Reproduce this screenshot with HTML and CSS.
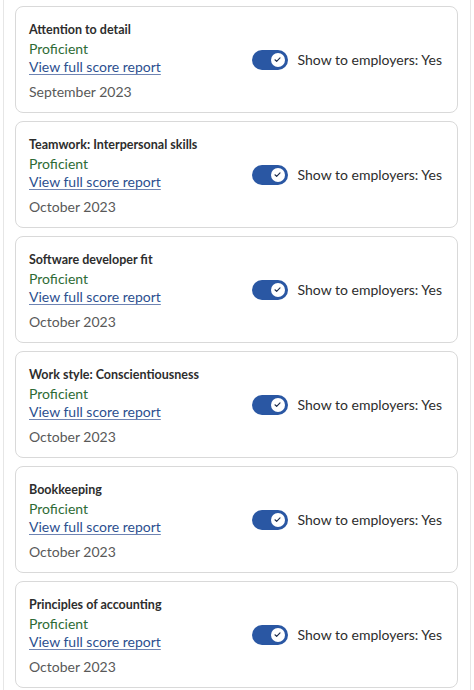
FILE: index.html
```html
<!DOCTYPE html>
<html lang="en">
<head>
<meta charset="utf-8">
<title>Assessments</title>
<link rel="stylesheet" href="styles.css">
</head>
<body>
<div class="wrap">
  <div class="card">
    <div class="info">
      <div class="title">Attention to detail</div>
      <div class="level">Proficient</div>
      <a class="link" href="#">View full score report</a>
      <div class="date">September 2023</div>
    </div>
    <div class="share">
      <span class="toggle"><span class="knob"><svg viewBox="0 0 16 16" width="9" height="9"><path d="M3.5 8.5l3 2.8L12.5 5" fill="none" stroke="#1c2b4a" stroke-width="2" stroke-linecap="round" stroke-linejoin="round"/></svg></span></span>
      <span class="label">Show to employers: Yes</span>
    </div>
  </div>
  <div class="card">
    <div class="info">
      <div class="title">Teamwork: Interpersonal skills</div>
      <div class="level">Proficient</div>
      <a class="link" href="#">View full score report</a>
      <div class="date">October 2023</div>
    </div>
    <div class="share">
      <span class="toggle"><span class="knob"><svg viewBox="0 0 16 16" width="9" height="9"><path d="M3.5 8.5l3 2.8L12.5 5" fill="none" stroke="#1c2b4a" stroke-width="2" stroke-linecap="round" stroke-linejoin="round"/></svg></span></span>
      <span class="label">Show to employers: Yes</span>
    </div>
  </div>
  <div class="card">
    <div class="info">
      <div class="title">Software developer fit</div>
      <div class="level">Proficient</div>
      <a class="link" href="#">View full score report</a>
      <div class="date">October 2023</div>
    </div>
    <div class="share">
      <span class="toggle"><span class="knob"><svg viewBox="0 0 16 16" width="9" height="9"><path d="M3.5 8.5l3 2.8L12.5 5" fill="none" stroke="#1c2b4a" stroke-width="2" stroke-linecap="round" stroke-linejoin="round"/></svg></span></span>
      <span class="label">Show to employers: Yes</span>
    </div>
  </div>
  <div class="card">
    <div class="info">
      <div class="title">Work style: Conscientiousness</div>
      <div class="level">Proficient</div>
      <a class="link" href="#">View full score report</a>
      <div class="date">October 2023</div>
    </div>
    <div class="share">
      <span class="toggle"><span class="knob"><svg viewBox="0 0 16 16" width="9" height="9"><path d="M3.5 8.5l3 2.8L12.5 5" fill="none" stroke="#1c2b4a" stroke-width="2" stroke-linecap="round" stroke-linejoin="round"/></svg></span></span>
      <span class="label">Show to employers: Yes</span>
    </div>
  </div>
  <div class="card">
    <div class="info">
      <div class="title">Bookkeeping</div>
      <div class="level">Proficient</div>
      <a class="link" href="#">View full score report</a>
      <div class="date">October 2023</div>
    </div>
    <div class="share">
      <span class="toggle"><span class="knob"><svg viewBox="0 0 16 16" width="9" height="9"><path d="M3.5 8.5l3 2.8L12.5 5" fill="none" stroke="#1c2b4a" stroke-width="2" stroke-linecap="round" stroke-linejoin="round"/></svg></span></span>
      <span class="label">Show to employers: Yes</span>
    </div>
  </div>
  <div class="card">
    <div class="info">
      <div class="title">Principles of accounting</div>
      <div class="level">Proficient</div>
      <a class="link" href="#">View full score report</a>
      <div class="date">October 2023</div>
    </div>
    <div class="share">
      <span class="toggle"><span class="knob"><svg viewBox="0 0 16 16" width="9" height="9"><path d="M3.5 8.5l3 2.8L12.5 5" fill="none" stroke="#1c2b4a" stroke-width="2" stroke-linecap="round" stroke-linejoin="round"/></svg></span></span>
      <span class="label">Show to employers: Yes</span>
    </div>
  </div>
</div>
</body>
</html>
```
FILE: styles.css
```css
* { box-sizing: border-box; }
html, body { margin: 0; padding: 0; background: #ffffff; }
body {
  font-family: "Lato", "Noto Sans", sans-serif;
  color: #2d2d2d;
}
.wrap {
  margin: 0 3px;
  border-left: 1px solid #e6e6e6;
  border-right: 1px solid #e6e6e6;
  padding: 6px 12px 0 11px;
  display: flex;
  flex-direction: column;
  gap: 8px;
  height: 690px;
  overflow: hidden;
}
.card {
  flex: none;
  height: 107px;
  border: 1px solid #d9d9d9;
  border-radius: 8px;
  display: flex;
  align-items: center;
  justify-content: space-between;
  padding: 0 15px 0 13px;
}
.info {
  align-self: flex-start;
  display: flex;
  flex-direction: column;
  align-items: flex-start;
  padding-top: 15px;
}
.title {
  font-size: 12.5px;
  font-weight: 700;
  line-height: 16px;
  color: #2d2d2d;
  margin-bottom: 2px;
}
.level {
  font-size: 14px;
  line-height: 18px;
  color: #2e6b35;
}
.link {
  font-size: 14px;
  line-height: 18px;
  color: #2c4f8f;
  text-decoration: underline;
  text-decoration-color: #6f84b3;
  text-underline-offset: 2px;
}
.date {
  margin-top: 7px;
  font-size: 14px;
  line-height: 18px;
  color: #595959;
}
.share {
  display: flex;
  align-items: center;
  gap: 10px;
}
.toggle {
  width: 36px;
  height: 20px;
  border-radius: 10px;
  background: #2a57a3;
  display: flex;
  align-items: center;
  justify-content: flex-end;
  padding-right: 3px;
}
.knob {
  width: 14px;
  height: 14px;
  border-radius: 50%;
  background: #ffffff;
  display: flex;
  align-items: center;
  justify-content: center;
}
.label {
  font-size: 14px;
  line-height: 18px;
  color: #2d2d2d;
}
```
